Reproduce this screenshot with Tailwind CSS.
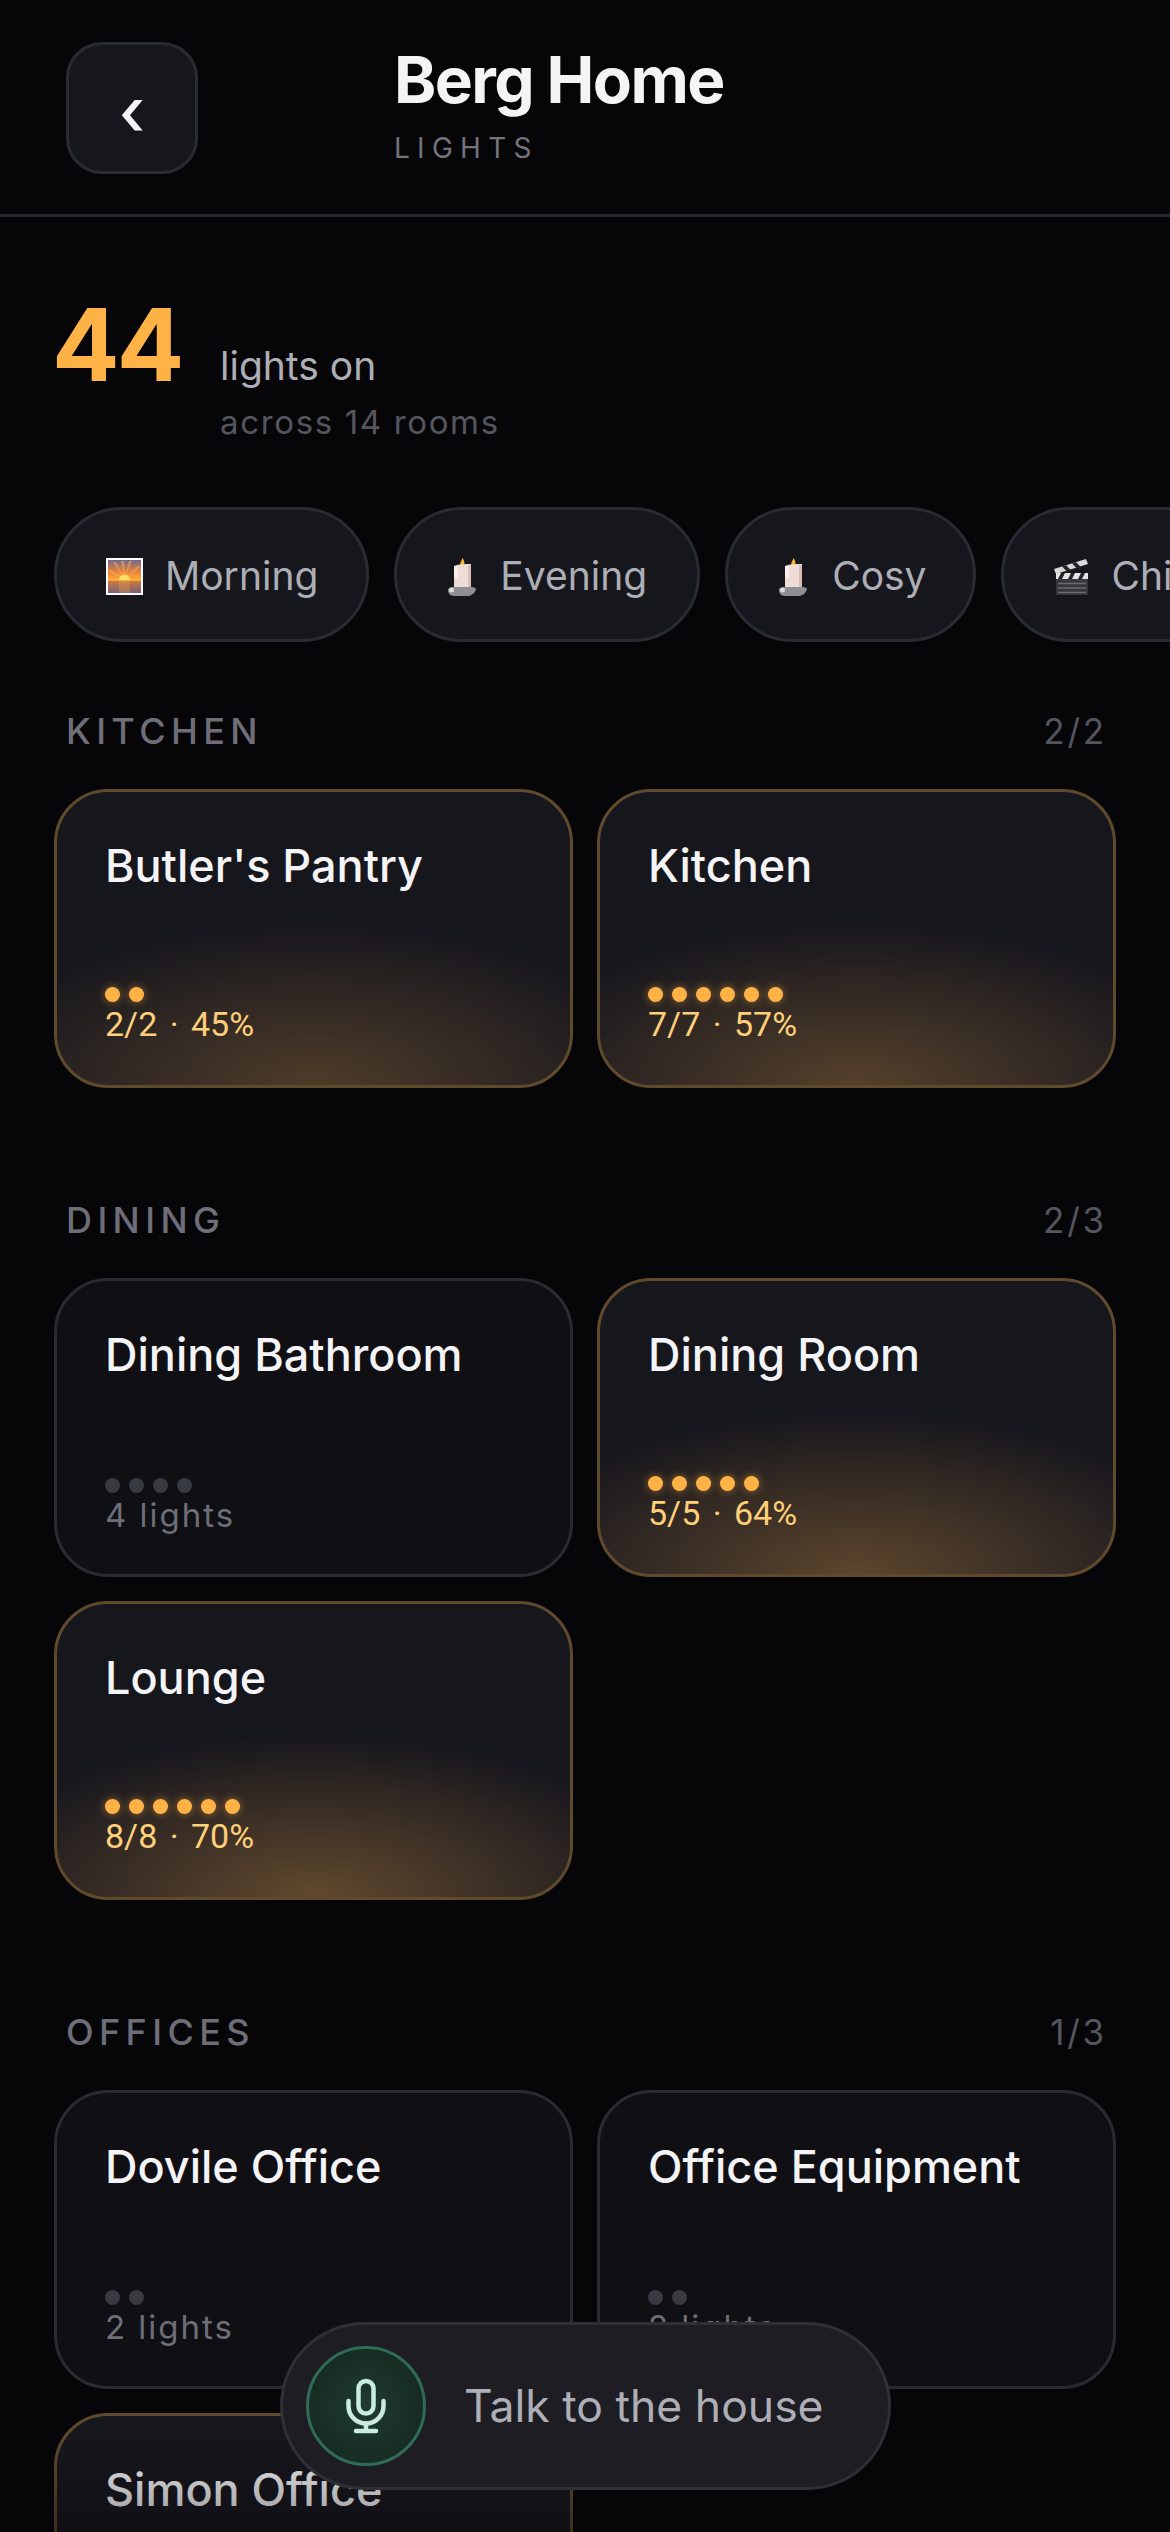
<!DOCTYPE html>
<html lang="en">
<head>
    <meta charset="UTF-8">
    <meta name="viewport" content="width=device-width, initial-scale=1.0">
    <title>Berg Home - Lights</title>
    <script src="https://cdn.jsdelivr.net/npm/@tailwindcss/browser@4"></script>
</head>
<body class="relative h-[2532px] w-[1170px] overflow-hidden bg-[#060609] font-[Inter,sans-serif] text-[#f4f4f6]">

    <!-- header -->
    <header class="flex h-[217px] items-start border-b-[3px] border-[#26262e] pl-[66px] pt-[42px]">
        <button class="flex h-[132px] w-[132px] items-center justify-center rounded-[36px] border-[3px] border-[#2a2a33] bg-[#16161d] pt-[6px] text-[66px] leading-none font-medium text-[#f4f4f6]">‹</button>
        <div class="ml-[196px] -mt-[2px]">
            <h1 class="text-[64px] leading-[80px] font-bold tracking-[-0.025em]">Berg Home</h1>
            <p class="mt-[11px] text-[28px] leading-[34px] tracking-[0.26em] text-[#73737d]">LIGHTS</p>
        </div>
    </header>

    <!-- total -->
    <section class="flex items-start pl-[52px] pt-[78px]">
        <div class="w-[168px] text-[100px] leading-[100px] font-bold tracking-[-0.03em] text-[#ffb347]">44</div>
        <div class="pt-[46px]">
            <p class="text-[39px] leading-[50px] text-[#aeaeb6]">lights on</p>
            <p class="mt-[11px] text-[33px] leading-[40px] tracking-[0.05em] text-[#55555e]">across 14 rooms</p>
        </div>
    </section>

    <!-- scenes -->
    <div class="mt-[65px] flex gap-[25px] pl-[54px] text-[39px] text-[#aeaeb6]">
        <div class="flex h-[135px] shrink-0 items-center gap-[22px] rounded-full border-[3px] border-[#2a2a33] bg-[#16161d] pl-[49px] pr-[48px] pt-[4px]">
            <svg class="h-[37px] w-[37px]" viewBox="0 0 37 37">
                <defs>
                    <linearGradient id="sky" x1="0" y1="0" x2="0" y2="1">
                        <stop offset="0" stop-color="#6f6a8c"/>
                        <stop offset="0.35" stop-color="#e8803f"/>
                        <stop offset="0.62" stop-color="#fdb02f"/>
                        <stop offset="0.64" stop-color="#c97a45"/>
                        <stop offset="1" stop-color="#7a5f78"/>
                    </linearGradient>
                </defs>
                <rect width="37" height="37" fill="#fff"/>
                <rect x="2" y="2" width="33" height="33" fill="url(#sky)"/>
                <path d="M18.500 21 7 4h3zM18.500 21 15 3h3zM18.500 21 23 3h3zM18.500 21 33 7v3zM18.500 21 3 11v3z" fill="#ffc04d" opacity="0.45"/>
                <path d="M13 22a5.500 5.500 0 0 1 11 0z" fill="#ffe066"/>
                <rect x="13" y="23" width="11" height="12" fill="#e8a040" opacity="0.35"/>
            </svg>
            <span>Morning</span>
        </div>
        <div class="flex h-[135px] shrink-0 items-center gap-[22px] rounded-full border-[3px] border-[#2a2a33] bg-[#16161d] pl-[49px] pr-[50px] pt-[4px]">
            <svg class="h-[38px] w-[32px]" viewBox="-2 0 32 38">
                <path d="M14.500 0c2 3 2.500 5 1.500 8h-3.500c-1-3 1-5 2-8z" fill="#f5b32e"/>
                <path d="M6 8c5-2 11-2 17-2v25H6z" fill="#efdcd6"/>
                <path d="M6 8h4v12c-2 1-3 0-4-2z" fill="#f9eee8"/>
                <rect x="20" y="7" width="3" height="24" fill="#d8bdb4"/>
                <path d="M0 32c0-2 3-3 5-3h19c2 0 4 1 4 2-1 4-4 6-7 7H6c-4 0-6-3-6-6z" fill="#8f8f93"/>
                <circle cx="3.500" cy="32" r="2.500" fill="#dcdcde"/>
            </svg>
            <span>Evening</span>
        </div>
        <div class="flex h-[135px] shrink-0 items-center gap-[23px] rounded-full border-[3px] border-[#2a2a33] bg-[#16161d] pl-[49px] pr-[46px] pt-[4px]">
            <svg class="h-[38px] w-[32px]" viewBox="-2 0 32 38">
                <path d="M14.500 0c2 3 2.500 5 1.500 8h-3.500c-1-3 1-5 2-8z" fill="#f5b32e"/>
                <path d="M6 8c5-2 11-2 17-2v25H6z" fill="#efdcd6"/>
                <path d="M6 8h4v12c-2 1-3 0-4-2z" fill="#f9eee8"/>
                <rect x="20" y="7" width="3" height="24" fill="#d8bdb4"/>
                <path d="M0 32c0-2 3-3 5-3h19c2 0 4 1 4 2-1 4-4 6-7 7H6c-4 0-6-3-6-6z" fill="#8f8f93"/>
                <circle cx="3.500" cy="32" r="2.500" fill="#dcdcde"/>
            </svg>
            <span>Cosy</span>
        </div>
        <div class="flex h-[135px] shrink-0 items-center gap-[23px] rounded-full border-[3px] border-[#2a2a33] bg-[#16161d] pl-[49px] pr-[48px] pt-[4px]">
            <svg class="h-[38px] w-[36px]" viewBox="0 0 36 38">
                <path d="M1 11 33 1l2 5L3 16z" fill="#d9d9d9"/>
                <path d="M9 8.500l5 5 4-1.200-5-5.300zM19 5.500l5 5 4-1.200-5-5.300z" fill="#26262a"/>
                <rect x="3" y="15" width="32" height="6" fill="#e4e4e4"/>
                <path d="M8 15h4l-3 6H5zM18 15h4l-3 6h-4zM28 15h4l-3 6h-4z" fill="#26262a"/>
                <rect x="3" y="21" width="32" height="16" fill="#37373b"/>
                <path d="M5 25.500h28M5 30h28M5 34.500h28" stroke="#6c6c70" stroke-width="1.500"/>
            </svg>
            <span>Chill</span>
        </div>
    </div>

    <!-- kitchen -->
    <section class="mt-[61px] px-[54px]">
        <div class="flex items-center justify-between pl-[12px] pr-[9px]">
            <h2 class="text-[36px] leading-[56px] font-medium tracking-[0.15em] text-[#6e6e78]">KITCHEN</h2>
            <span class="text-[35px] tracking-[0.08em] text-[#55555e]">2/2</span>
        </div>
        <div class="mt-[30px] grid grid-cols-2 gap-[24px]">
            <div class="flex h-[299px] flex-col rounded-[54px] border-[3px] border-[#5f4a2c] bg-[#16161d] bg-[radial-gradient(ellipse_72%_56%_at_50%_100%,rgba(255,180,80,0.24),transparent)] pb-[42px] pl-[48px] pt-[44px]">
                <h3 class="text-[45px] leading-[60px] font-medium">Butler's Pantry</h3>
                <div class="mt-auto flex gap-[9px]">
                    <span class="h-[15px] w-[15px] rounded-full bg-[#ffb347] shadow-[0_0_9px_rgba(255,179,71,0.5)]"></span>
                    <span class="h-[15px] w-[15px] rounded-full bg-[#ffb347] shadow-[0_0_9px_rgba(255,179,71,0.5)]"></span>
                </div>
                <p class="mt-[3px] font-[Roboto,sans-serif] text-[34px] leading-[38px] text-[#ffcf7a] [word-spacing:4px]">2/2 · 45%</p>
            </div>
            <div class="flex h-[299px] flex-col rounded-[54px] border-[3px] border-[#5f4a2c] bg-[#16161d] bg-[radial-gradient(ellipse_72%_56%_at_50%_100%,rgba(255,180,80,0.27),transparent)] pb-[42px] pl-[48px] pt-[44px]">
                <h3 class="text-[45px] leading-[60px] font-medium">Kitchen</h3>
                <div class="mt-auto flex gap-[9px]">
                    <span class="h-[15px] w-[15px] rounded-full bg-[#ffb347] shadow-[0_0_9px_rgba(255,179,71,0.5)]"></span>
                    <span class="h-[15px] w-[15px] rounded-full bg-[#ffb347] shadow-[0_0_9px_rgba(255,179,71,0.5)]"></span>
                    <span class="h-[15px] w-[15px] rounded-full bg-[#ffb347] shadow-[0_0_9px_rgba(255,179,71,0.5)]"></span>
                    <span class="h-[15px] w-[15px] rounded-full bg-[#ffb347] shadow-[0_0_9px_rgba(255,179,71,0.5)]"></span>
                    <span class="h-[15px] w-[15px] rounded-full bg-[#ffb347] shadow-[0_0_9px_rgba(255,179,71,0.5)]"></span>
                    <span class="h-[15px] w-[15px] rounded-full bg-[#ffb347] shadow-[0_0_9px_rgba(255,179,71,0.5)]"></span>
                </div>
                <p class="mt-[3px] font-[Roboto,sans-serif] text-[34px] leading-[38px] text-[#ffcf7a] [word-spacing:4px]">7/7 · 57%</p>
            </div>
        </div>
    </section>

    <!-- dining -->
    <section class="mt-[104px] px-[54px]">
        <div class="flex items-center justify-between pl-[12px] pr-[9px]">
            <h2 class="text-[36px] leading-[56px] font-medium tracking-[0.15em] text-[#6e6e78]">DINING</h2>
            <span class="text-[35px] tracking-[0.08em] text-[#55555e]">2/3</span>
        </div>
        <div class="mt-[30px] grid grid-cols-2 gap-[24px]">
            <div class="flex h-[299px] flex-col rounded-[54px] border-[3px] border-[#2a2a33] bg-[#0f0f14] pb-[40px] pl-[48px] pt-[44px]">
                <h3 class="text-[45px] leading-[60px] font-medium">Dining Bathroom</h3>
                <div class="mt-auto flex gap-[9px]">
                    <span class="h-[15px] w-[15px] rounded-full bg-[#3a3a42]"></span>
                    <span class="h-[15px] w-[15px] rounded-full bg-[#3a3a42]"></span>
                    <span class="h-[15px] w-[15px] rounded-full bg-[#3a3a42]"></span>
                    <span class="h-[15px] w-[15px] rounded-full bg-[#3a3a42]"></span>
                </div>
                <p class="mt-[3px] text-[33px] leading-[38px] tracking-[0.06em] text-[#6e6e78]">4 lights</p>
            </div>
            <div class="flex h-[299px] flex-col rounded-[54px] border-[3px] border-[#5f4a2c] bg-[#16161d] bg-[radial-gradient(ellipse_72%_56%_at_50%_100%,rgba(255,180,80,0.3),transparent)] pb-[42px] pl-[48px] pt-[44px]">
                <h3 class="text-[45px] leading-[60px] font-medium">Dining Room</h3>
                <div class="mt-auto flex gap-[9px]">
                    <span class="h-[15px] w-[15px] rounded-full bg-[#ffb347] shadow-[0_0_9px_rgba(255,179,71,0.5)]"></span>
                    <span class="h-[15px] w-[15px] rounded-full bg-[#ffb347] shadow-[0_0_9px_rgba(255,179,71,0.5)]"></span>
                    <span class="h-[15px] w-[15px] rounded-full bg-[#ffb347] shadow-[0_0_9px_rgba(255,179,71,0.5)]"></span>
                    <span class="h-[15px] w-[15px] rounded-full bg-[#ffb347] shadow-[0_0_9px_rgba(255,179,71,0.5)]"></span>
                    <span class="h-[15px] w-[15px] rounded-full bg-[#ffb347] shadow-[0_0_9px_rgba(255,179,71,0.5)]"></span>
                </div>
                <p class="mt-[3px] font-[Roboto,sans-serif] text-[34px] leading-[38px] text-[#ffcf7a] [word-spacing:4px]">5/5 · 64%</p>
            </div>
            <div class="flex h-[299px] flex-col rounded-[54px] border-[3px] border-[#5f4a2c] bg-[#16161d] bg-[radial-gradient(ellipse_72%_56%_at_50%_100%,rgba(255,180,80,0.32),transparent)] pb-[42px] pl-[48px] pt-[44px]">
                <h3 class="text-[45px] leading-[60px] font-medium">Lounge</h3>
                <div class="mt-auto flex gap-[9px]">
                    <span class="h-[15px] w-[15px] rounded-full bg-[#ffb347] shadow-[0_0_9px_rgba(255,179,71,0.5)]"></span>
                    <span class="h-[15px] w-[15px] rounded-full bg-[#ffb347] shadow-[0_0_9px_rgba(255,179,71,0.5)]"></span>
                    <span class="h-[15px] w-[15px] rounded-full bg-[#ffb347] shadow-[0_0_9px_rgba(255,179,71,0.5)]"></span>
                    <span class="h-[15px] w-[15px] rounded-full bg-[#ffb347] shadow-[0_0_9px_rgba(255,179,71,0.5)]"></span>
                    <span class="h-[15px] w-[15px] rounded-full bg-[#ffb347] shadow-[0_0_9px_rgba(255,179,71,0.5)]"></span>
                    <span class="h-[15px] w-[15px] rounded-full bg-[#ffb347] shadow-[0_0_9px_rgba(255,179,71,0.5)]"></span>
                </div>
                <p class="mt-[3px] font-[Roboto,sans-serif] text-[34px] leading-[38px] text-[#ffcf7a] [word-spacing:4px]">8/8 · 70%</p>
            </div>
        </div>
    </section>

    <!-- offices -->
    <section class="mt-[104px] px-[54px]">
        <div class="flex items-center justify-between pl-[12px] pr-[9px]">
            <h2 class="text-[36px] leading-[56px] font-medium tracking-[0.15em] text-[#6e6e78]">OFFICES</h2>
            <span class="text-[35px] tracking-[0.08em] text-[#55555e]">1/3</span>
        </div>
        <div class="mt-[30px] grid grid-cols-2 gap-[24px]">
            <div class="flex h-[299px] flex-col rounded-[54px] border-[3px] border-[#2a2a33] bg-[#0f0f14] pb-[40px] pl-[48px] pt-[44px]">
                <h3 class="text-[45px] leading-[60px] font-medium">Dovile Office</h3>
                <div class="mt-auto flex gap-[9px]">
                    <span class="h-[15px] w-[15px] rounded-full bg-[#3a3a42]"></span>
                    <span class="h-[15px] w-[15px] rounded-full bg-[#3a3a42]"></span>
                </div>
                <p class="mt-[3px] text-[33px] leading-[38px] tracking-[0.06em] text-[#6e6e78]">2 lights</p>
            </div>
            <div class="flex h-[299px] flex-col rounded-[54px] border-[3px] border-[#2a2a33] bg-[#0f0f14] pb-[40px] pl-[48px] pt-[44px]">
                <h3 class="text-[45px] leading-[60px] font-medium">Office Equipment</h3>
                <div class="mt-auto flex gap-[9px]">
                    <span class="h-[15px] w-[15px] rounded-full bg-[#3a3a42]"></span>
                    <span class="h-[15px] w-[15px] rounded-full bg-[#3a3a42]"></span>
                </div>
                <p class="mt-[3px] text-[33px] leading-[38px] tracking-[0.06em] text-[#6e6e78]">2 lights</p>
            </div>
            <div class="flex h-[299px] flex-col rounded-[54px] border-[3px] border-[#5f4a2c] bg-[#16161d] pb-[42px] pl-[48px] pt-[44px]">
                <h3 class="text-[45px] leading-[60px] font-medium">Simon Office</h3>
            </div>
        </div>
    </section>

    <!-- bottom fade and voice button -->
    <div class="absolute bottom-0 left-0 h-[100px] w-full bg-gradient-to-t from-[#060609]/40 to-transparent"></div>
    <div class="absolute left-[280px] top-[2322px] flex h-[168px] w-[611px] items-center gap-[38px] rounded-full border-[3px] border-[#2f2f36] bg-[#1d1d23] pl-[23px]">
        <div class="flex h-[120px] w-[120px] items-center justify-center rounded-full border-[3px] border-[#2f6b56] bg-[radial-gradient(circle,#1f3a30,#13261e)]">
            <svg class="h-[60px] w-[60px]" viewBox="0 0 24 24" fill="none" stroke="#c8ecdd" stroke-width="1.8" stroke-linecap="round" stroke-linejoin="round">
                <rect x="9" y="2" width="6" height="13" rx="3"/>
                <path d="M19 10v2a7 7 0 0 1-14 0v-2"/>
                <path d="M12 19v3M8 22h8"/>
            </svg>
        </div>
        <span class="text-[44.500px] text-[#aeaeb6]">Talk to the house</span>
    </div>

</body>
</html>
